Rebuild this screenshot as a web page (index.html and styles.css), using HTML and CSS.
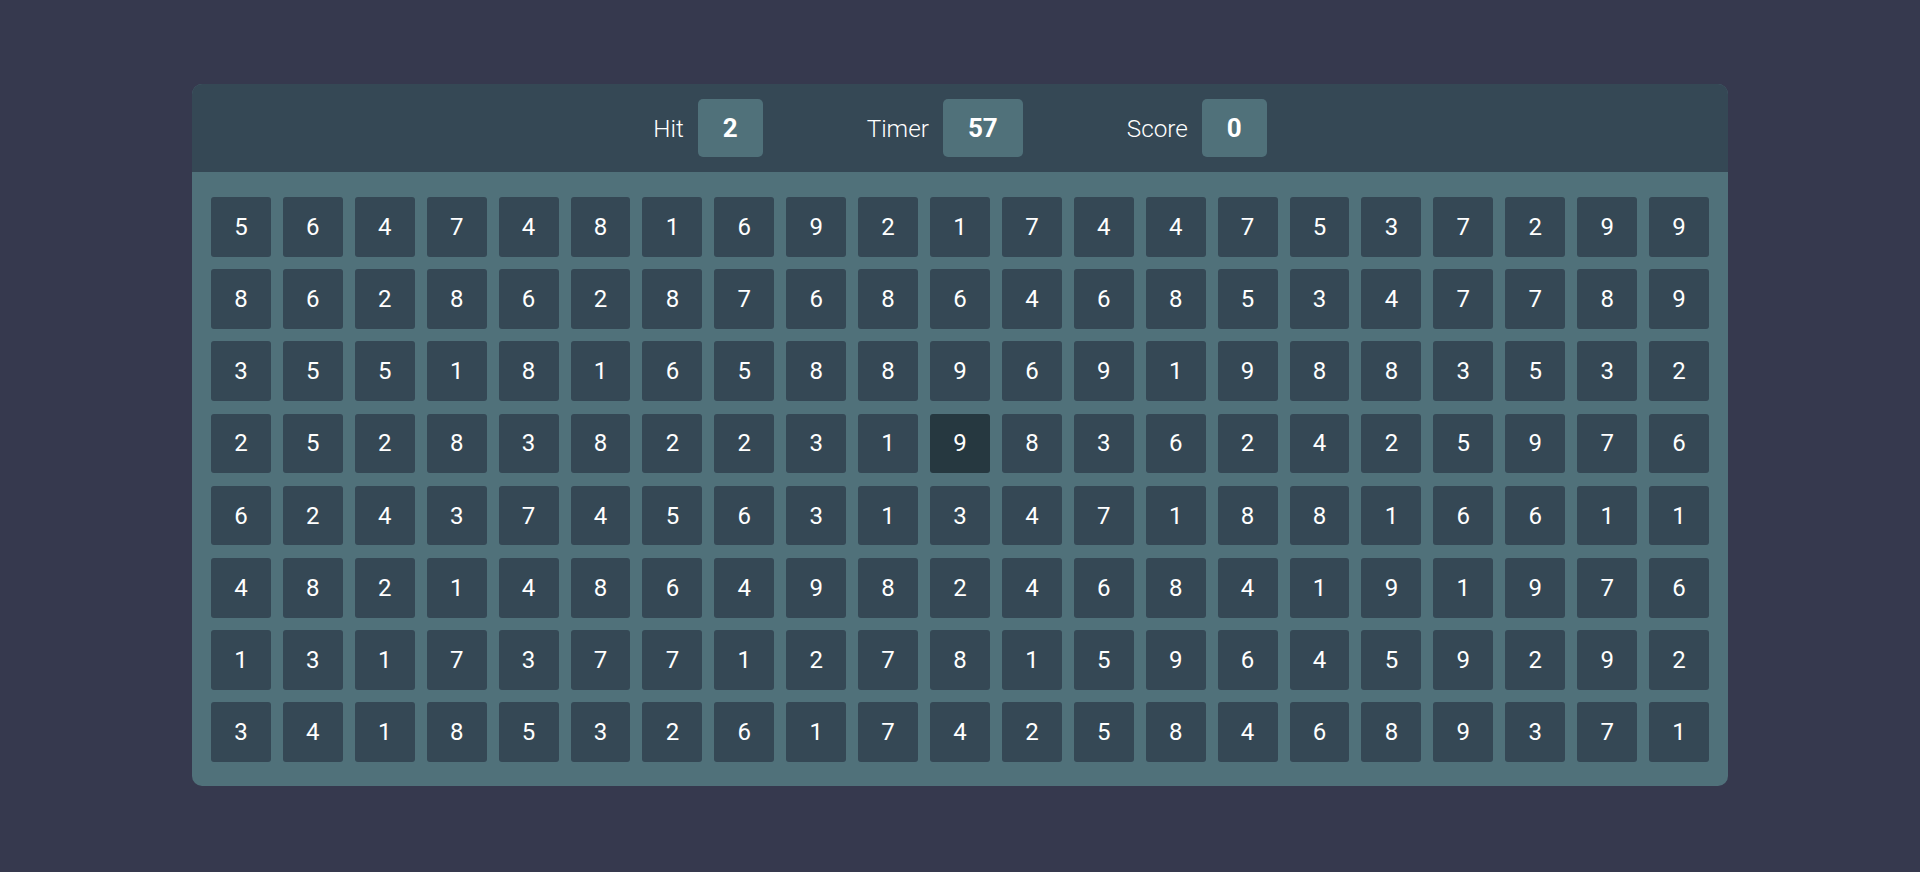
FILE: index.html
```html
<!DOCTYPE html>
<html>
<head>
<meta charset="utf-8">
<link rel="stylesheet" href="styles.css">
</head>
<body>
<div class="board">
  <div class="header">
    <div class="stat"><span class="label">Hit</span><span class="value">2</span></div>
    <div class="stat"><span class="label">Timer</span><span class="value">57</span></div>
    <div class="stat"><span class="label">Score</span><span class="value">0</span></div>
  </div>
  <div class="grid">
    <div class="tile">5</div><div class="tile">6</div><div class="tile">4</div><div class="tile">7</div><div class="tile">4</div><div class="tile">8</div><div class="tile">1</div><div class="tile">6</div><div class="tile">9</div><div class="tile">2</div><div class="tile">1</div><div class="tile">7</div><div class="tile">4</div><div class="tile">4</div><div class="tile">7</div><div class="tile">5</div><div class="tile">3</div><div class="tile">7</div><div class="tile">2</div><div class="tile">9</div><div class="tile">9</div>
    <div class="tile">8</div><div class="tile">6</div><div class="tile">2</div><div class="tile">8</div><div class="tile">6</div><div class="tile">2</div><div class="tile">8</div><div class="tile">7</div><div class="tile">6</div><div class="tile">8</div><div class="tile">6</div><div class="tile">4</div><div class="tile">6</div><div class="tile">8</div><div class="tile">5</div><div class="tile">3</div><div class="tile">4</div><div class="tile">7</div><div class="tile">7</div><div class="tile">8</div><div class="tile">9</div>
    <div class="tile">3</div><div class="tile">5</div><div class="tile">5</div><div class="tile">1</div><div class="tile">8</div><div class="tile">1</div><div class="tile">6</div><div class="tile">5</div><div class="tile">8</div><div class="tile">8</div><div class="tile">9</div><div class="tile">6</div><div class="tile">9</div><div class="tile">1</div><div class="tile">9</div><div class="tile">8</div><div class="tile">8</div><div class="tile">3</div><div class="tile">5</div><div class="tile">3</div><div class="tile">2</div>
    <div class="tile">2</div><div class="tile">5</div><div class="tile">2</div><div class="tile">8</div><div class="tile">3</div><div class="tile">8</div><div class="tile">2</div><div class="tile">2</div><div class="tile">3</div><div class="tile">1</div><div class="tile active">9</div><div class="tile">8</div><div class="tile">3</div><div class="tile">6</div><div class="tile">2</div><div class="tile">4</div><div class="tile">2</div><div class="tile">5</div><div class="tile">9</div><div class="tile">7</div><div class="tile">6</div>
    <div class="tile">6</div><div class="tile">2</div><div class="tile">4</div><div class="tile">3</div><div class="tile">7</div><div class="tile">4</div><div class="tile">5</div><div class="tile">6</div><div class="tile">3</div><div class="tile">1</div><div class="tile">3</div><div class="tile">4</div><div class="tile">7</div><div class="tile">1</div><div class="tile">8</div><div class="tile">8</div><div class="tile">1</div><div class="tile">6</div><div class="tile">6</div><div class="tile">1</div><div class="tile">1</div>
    <div class="tile">4</div><div class="tile">8</div><div class="tile">2</div><div class="tile">1</div><div class="tile">4</div><div class="tile">8</div><div class="tile">6</div><div class="tile">4</div><div class="tile">9</div><div class="tile">8</div><div class="tile">2</div><div class="tile">4</div><div class="tile">6</div><div class="tile">8</div><div class="tile">4</div><div class="tile">1</div><div class="tile">9</div><div class="tile">1</div><div class="tile">9</div><div class="tile">7</div><div class="tile">6</div>
    <div class="tile">1</div><div class="tile">3</div><div class="tile">1</div><div class="tile">7</div><div class="tile">3</div><div class="tile">7</div><div class="tile">7</div><div class="tile">1</div><div class="tile">2</div><div class="tile">7</div><div class="tile">8</div><div class="tile">1</div><div class="tile">5</div><div class="tile">9</div><div class="tile">6</div><div class="tile">4</div><div class="tile">5</div><div class="tile">9</div><div class="tile">2</div><div class="tile">9</div><div class="tile">2</div>
    <div class="tile">3</div><div class="tile">4</div><div class="tile">1</div><div class="tile">8</div><div class="tile">5</div><div class="tile">3</div><div class="tile">2</div><div class="tile">6</div><div class="tile">1</div><div class="tile">7</div><div class="tile">4</div><div class="tile">2</div><div class="tile">5</div><div class="tile">8</div><div class="tile">4</div><div class="tile">6</div><div class="tile">8</div><div class="tile">9</div><div class="tile">3</div><div class="tile">7</div><div class="tile">1</div>
  </div>
</div>
</body>
</html>
```
FILE: styles.css
```css
html, body {
  margin: 0;
  padding: 0;
}
body {
  background: #36394e;
  font-family: Roboto, "Liberation Sans", sans-serif;
  color: #ffffff;
  height: 100vh;
  box-sizing: border-box;
  padding-bottom: 2px;
  display: flex;
  align-items: center;
  justify-content: center;
}
.board {
  width: 1536px;
  background: #50717a;
  border-radius: 10px;
  overflow: hidden;
}
.header {
  height: 88px;
  background: #354855;
  display: flex;
  align-items: center;
  justify-content: center;
  gap: 104px;
}
.stat {
  display: flex;
  align-items: center;
  gap: 14px;
}
.label {
  font-weight: 300;
  font-size: 24.3px;
}
.value {
  height: 58px;
  padding: 0 25px;
  box-sizing: border-box;
  background: #50717a;
  border-radius: 5px;
  display: flex;
  align-items: center;
  justify-content: center;
  font-weight: 700;
  font-size: 26px;
}
.grid {
  padding: 25px 19px 24px;
  display: grid;
  grid-template-columns: repeat(21, 1fr);
  column-gap: 12px;
  row-gap: 12.3px;
}
.tile {
  height: 59.8px;
  background: #354855;
  border-radius: 3px;
  display: flex;
  align-items: center;
  justify-content: center;
  font-size: 24px;
}
.tile.active {
  background: #263840;
}
```
